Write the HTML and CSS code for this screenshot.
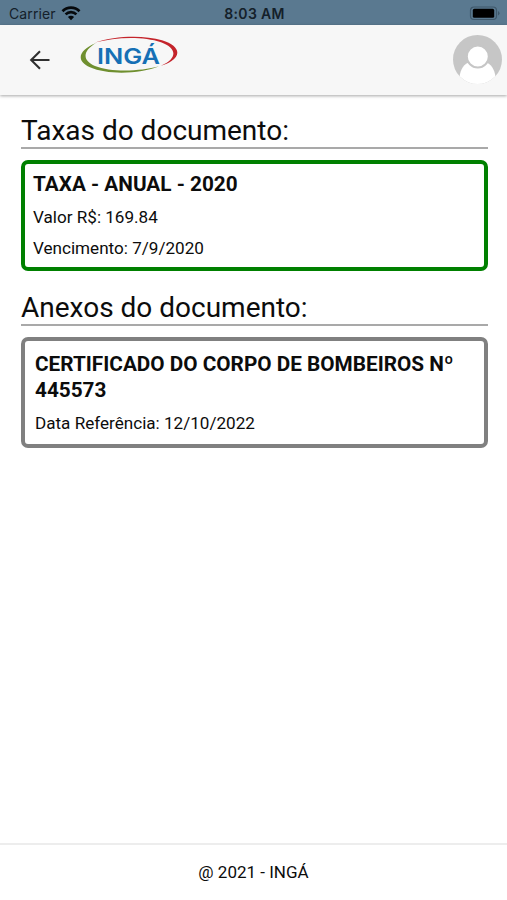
FILE: index.html
```
<!DOCTYPE html>
<html lang="pt-BR">
<head>
  <meta charset="UTF-8">
  <meta name="viewport" content="width=device-width, initial-scale=1.0">
  <title>INGÁ - Documento</title>
  <link rel="stylesheet" href="styles.css">
</head>
<body>
  <div class="status-bar">
    <div class="carrier">
      <span>Carrier</span>
      <svg width="20" height="15" viewBox="0 0 20 15">
        <path d="M1.500 5.200a12 12 0 0 1 17 0M4.600 8.400a7.600 7.600 0 0 1 10.800 0" fill="none" stroke="#06090c" stroke-width="2.700"/>
        <path d="M10 14.200l-3.100-3.100a4.400 4.400 0 0 1 6.200 0z" fill="#06090c"/>
      </svg>
    </div>
    <div class="clock">8:03 AM</div>
    <div class="battery">
      <svg width="31" height="15" viewBox="0 0 31 15">
        <rect x="1.500" y="1" width="26" height="12.500" rx="3.500" fill="none" stroke="#3f586b" stroke-width="1.200"/>
        <rect x="3.800" y="2.800" width="21.400" height="9" rx="1.600" fill="#000"/>
        <path d="M29 5v4.600q1.500-.8 1.500-2.300T29 5z" fill="#3f586b"/>
      </svg>
    </div>
  </div>

  <header class="toolbar">
    <a href="#" class="back-button" aria-label="Voltar">
      <svg width="22" height="20" viewBox="0 0 22 20">
        <path d="M20.500 10H2.200M11 1.200L2.200 10l8.800 8.800" fill="none" stroke="#303030" stroke-width="2.100"/>
      </svg>
    </a>
    <svg class="logo" width="100" height="40" viewBox="0 0 100 40">
      <path d="M15 7.500C35 .5 64-.2 82 5.300c16 4.900 20 13.700 9.500 20.700-3 2-6.500 3.500-10.500 4.800C97 24 98 13.500 81 7.200 63 .9 35 2 15 7.500z" fill="#c4242b"/>
      <path d="M16 8C-1 15-5 25.500 10 32.300c18 8 51 6.500 69-1C60 36.500 31 37.500 15 31 2 25.500 2.500 16 16 8z" fill="#6f8f2f"/>
      <text x="17" y="28.500" textLength="63" lengthAdjust="spacingAndGlyphs" class="logo-text">INGÁ</text>
    </svg>
    <div class="avatar">
      <svg width="49" height="49" viewBox="0 0 49 49">
        <defs>
          <clipPath id="avatar-clip"><circle cx="24.500" cy="24.500" r="24.500"/></clipPath>
        </defs>
        <g clip-path="url(#avatar-clip)">
          <rect width="49" height="49" fill="#c6c6c6"/>
          <path d="M6.500 42c1-8 4.500-13.500 11-15h14c6.500 1.500 10 7 11 15v7h-36z" fill="#fff"/>
          <circle cx="24.800" cy="21.500" r="11" fill="#fff" stroke="#c6c6c6" stroke-width="2"/>
        </g>
      </svg>
    </div>
  </header>

  <main class="content">
    <section>
      <h2>Taxas do documento:</h2>
      <div class="card card-paid">
        <h3>TAXA - ANUAL - 2020</h3>
        <p>Valor R$: 169.84</p>
        <p>Vencimento: 7/9/2020</p>
      </div>
    </section>

    <section>
      <h2>Anexos do documento:</h2>
      <div class="card card-attachment">
        <h3>CERTIFICADO DO CORPO DE BOMBEIROS Nº 445573</h3>
        <p>Data Referência: 12/10/2022</p>
      </div>
    </section>
  </main>

  <footer class="footer">@ 2021 - INGÁ</footer>
</body>
</html>
```
FILE: styles.css
```
* {
  margin: 0;
  padding: 0;
  box-sizing: border-box;
}

body {
  font-family: Roboto, sans-serif;
  background: #fff;
  color: #0c0c0c;
  height: 100vh;
  display: flex;
  flex-direction: column;
}

svg {
  display: block;
}

.status-bar {
  display: grid;
  grid-template-columns: 1fr auto 1fr;
  align-items: center;
  height: 25px;
  padding: 2px 7px 0 9px;
  background: #5a7990;
  font-family: Inter, sans-serif;
  font-size: 14px;
  color: #14202a;
}

.carrier {
  display: flex;
  align-items: center;
  gap: 5px;
  letter-spacing: 0.1px;
}

.clock {
  font-weight: 600;
  letter-spacing: 0.3px;
}

.battery {
  justify-self: end;
}

.toolbar {
  display: flex;
  align-items: center;
  height: 70px;
  padding: 0 5px 0 29px;
  background: #f7f7f7;
  box-shadow: 0 1px 3px rgba(0, 0, 0, 0.35);
}

.logo {
  margin: 0 auto 10px 29px;
}

.logo-text {
  font-family: Inter, sans-serif;
  font-size: 22px;
  font-weight: 600;
  fill: #1670b5;
}

.avatar {
  margin-bottom: 2px;
}

.content {
  flex: 1;
  padding: 18px 19px 0 21px;
}

h2 {
  height: 36px;
  margin-bottom: 11px;
  border-bottom: 2px solid #a9a9a9;
  font-size: 28px;
  font-weight: 400;
  line-height: 36px;
}

section + section {
  margin-top: 19px;
}

.card {
  height: 111px;
  border: 4px solid gray;
  border-radius: 7px;
}

.card h3 {
  font-size: 20.75px;
  font-weight: 700;
  line-height: 26px;
}

.card p {
  font-size: 17.1px;
  line-height: 20px;
}

.card-paid {
  padding: 7px 8px;
  border-color: green;
}

.card-paid p {
  margin-top: 10px;
}

.card-paid p + p {
  margin-top: 11px;
}

.card-attachment {
  padding: 10px 10px;
}

.card-attachment p {
  margin-top: 10px;
}

.footer {
  height: 57px;
  border-top: 2px solid #ededed;
  font-size: 17px;
  line-height: 55px;
  text-align: center;
}
```
